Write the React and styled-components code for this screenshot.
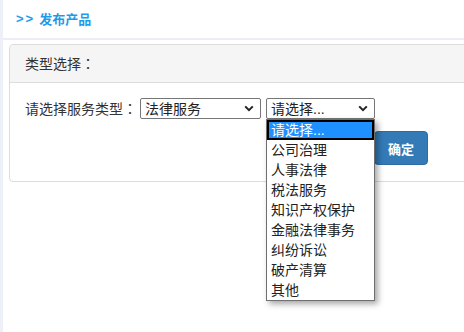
import React from "react";
import styled, { createGlobalStyle } from "styled-components";

const GlobalStyle = createGlobalStyle`
    html, body {
        margin: 0;
        padding: 0;
        background: #fff;
        overflow: hidden;
    }
    body {
        font-family: "Liberation Sans", "Noto Sans CJK SC", sans-serif;
        color: #333;
    }
`;

const Page = styled.div`
    display: flex;
    width: 464px;
    height: 332px;
    overflow: hidden;
`;

const SideStrip = styled.div`
    width: 3px;
    flex-shrink: 0;
    background: #eef0f9;
`;

const Main = styled.div`
    flex: 1;
    display: flex;
    flex-direction: column;
    min-width: 0;
`;

const TitleBar = styled.div`
    height: 40px;
    box-sizing: border-box;
    border-bottom: 2px solid #eceef7;
    display: flex;
    align-items: center;
    padding: 0 0 2px 13px;
    font-size: 13px;
    font-weight: bold;
    color: #1e9be8;
`;

const Arrows = styled.span`
    letter-spacing: 2px;
    margin-right: 4px;
`;

// full-width colon, centred in its cell like the reference font
const Colon = styled.span`
    font-family: "Noto Sans CJK JP", sans-serif;
`;

const Content = styled.div`
    padding: 4px 0 0 6px;
`;

const Card = styled.div`
    margin-right: -10px;
    border: 1px solid #ddd;
    border-radius: 4px;
    background: #fff;
`;

const CardHeader = styled.div`
    height: 38px;
    box-sizing: border-box;
    background: #f5f5f5;
    border-bottom: 1px solid #ddd;
    border-radius: 4px 4px 0 0;
    display: flex;
    align-items: center;
    padding: 0 0 2px 15px;
    font-size: 14px;
    color: #333;
`;

const CardBody = styled.div`
    padding: 14px 15px 16px 15px;
    display: flex;
    flex-direction: column;
`;

const Row = styled.div`
    display: flex;
    align-items: center;
    height: 22px;
    font-size: 14px;
`;

const Label = styled.span`
    color: #333;
    width: 115px;
`;

const SelectBox = styled.div`
    position: relative;
    width: ${p => p.$width}px;
    height: 21px;
    box-sizing: border-box;
    border: 1px solid #767676;
    border-radius: 2px;
    margin-right: 5px;
    display: flex;
    align-items: center;
    padding: 0 0 0 4px;
    font-size: 14px;
    color: #222;
    background: #fff;
`;

const Chevron = styled.svg`
    position: absolute;
    right: 6px;
    top: 6px;
`;

const ButtonRow = styled.div`
    display: flex;
    padding: 12px 0 0 349px;
`;

const Button = styled.button`
    width: 54px;
    height: 34px;
    border: 1px solid #2e6da4;
    border-radius: 4px;
    background: #337ab7;
    color: #fff;
    font-weight: bold;
    font-size: 13px;
    font-family: "Liberation Sans", "Noto Sans CJK SC", sans-serif;
    padding: 0;
`;

const Popup = styled.ul`
    position: absolute;
    left: -1px;
    top: 20px;
    width: 109px;
    box-sizing: border-box;
    margin: 0;
    padding: 0;
    list-style: none;
    border: 1px solid #6f6f6f;
    background: #fff;
    box-shadow: 3px 3px 6px rgba(0, 0, 0, 0.35);
    z-index: 10;
`;

const Option = styled.li`
    height: 20px;
    box-sizing: border-box;
    font-size: 14px;
    color: ${p => (p.$selected ? "#fff" : "#222")};
    background: ${p => (p.$selected ? "#1e90ff" : "transparent")};
    border: ${p => (p.$selected ? "2px solid #000" : "none")};
    line-height: ${p => (p.$selected ? "16px" : "20px")};
    padding-left: ${p => (p.$selected ? "2px" : "4px")};
`;

const options = [
    "请选择...",
    "公司治理",
    "人事法律",
    "税法服务",
    "知识产权保护",
    "金融法律事务",
    "纠纷诉讼",
    "破产清算",
    "其他",
];

const ChevronIcon = () => (
    <Chevron width="10" height="7" viewBox="0 0 10 7">
        <path d="M1.2 1.4 L5 5.2 L8.8 1.4" fill="none" stroke="#222" strokeWidth="2" />
    </Chevron>
);

export default function App() {
    return (
        <>
            <GlobalStyle />
            <Page>
                <SideStrip />
                <Main>
                    <TitleBar>
                        <Arrows>&gt;&gt;</Arrows>发布产品
                    </TitleBar>
                    <Content>
                        <Card>
                            <CardHeader>类型选择<Colon>：</Colon></CardHeader>
                            <CardBody>
                                <Row>
                                    <Label>请选择服务类型<Colon>：</Colon></Label>
                                    <SelectBox $width={121}>
                                        法律服务
                                        <ChevronIcon />
                                    </SelectBox>
                                    <SelectBox $width={109}>
                                        请选择...
                                        <ChevronIcon />
                                        <Popup>
                                            {options.map((o, i) => (
                                                <Option key={o} $selected={i === 0}>{o}</Option>
                                            ))}
                                        </Popup>
                                    </SelectBox>
                                </Row>
                                <ButtonRow>
                                    <Button>确定</Button>
                                </ButtonRow>
                            </CardBody>
                        </Card>
                    </Content>
                </Main>
            </Page>
        </>
    );
}
